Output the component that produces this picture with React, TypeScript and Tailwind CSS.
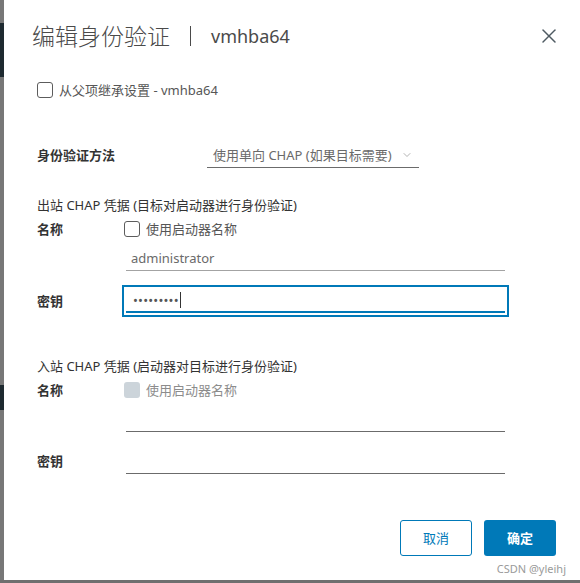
import { X, ChevronDown } from "lucide-react";

const font = { fontFamily: '"Noto Sans", "Noto Sans CJK SC", sans-serif' };

// Underlined text field, Clarity style
const Field = ({ value, tone = "line" }: { value?: string; tone?: "line" | "soft" }) => (
  <div
    className={`ml-[2px] flex h-[25px] w-[379px] items-center border-b pl-[5px] text-[13px] leading-none text-[#6a6a6a] ${
      tone === "soft" ? "border-[#a3a3a3]" : "border-[#6b6b6b]"
    }`}
  >
    {value}
  </div>
);

const Checkbox = ({ disabled = false }: { disabled?: boolean }) => (
  <span
    className={`block h-[16px] w-[16px] shrink-0 rounded-[3px] ${
      disabled ? "bg-[#ccd4da]" : "border border-[#5c5c5c] bg-white"
    }`}
  />
);

const App = () => {
  return (
    <div className="flex h-[583px] w-[580px] flex-col bg-[#6f6f6f]" style={font}>
      <div className="flex h-[580px]">
        {/* Page behind the dialog */}
        <div className="flex w-[4px] flex-col bg-[#777777]">
          <div className="mt-[23px] h-[54px] bg-[#1e2a30]" />
          <div className="mt-[308px] h-[25px] bg-[#1e2a30]" />
        </div>

        <div className="relative flex flex-1 flex-col bg-white">
          {/* Header */}
          <div className="mt-[20px] flex h-[32px] items-center pl-[28px] pr-[19px]">
            <span className="text-[23px] font-light leading-none text-[#4a4a4a]">编辑身份验证</span>
            <span className="mx-[20px] h-[20px] w-px bg-[#4a4a4a]" />
            <span className="text-[18px] leading-none text-[#4a4a4a]">vmhba64</span>
            <X className="ml-auto h-[24px] w-[24px] text-[#4e5a62]" strokeWidth={1.5} />
          </div>

          <div className="flex flex-col pl-[33px]">
            {/* Inherit */}
            <div className="mt-[30px] flex h-[16px] items-center gap-[6px]">
              <Checkbox />
              <span className="text-[13px] leading-none text-[#565656]">从父项继承设置 - vmhba64</span>
            </div>

            {/* Auth method */}
            <div className="mt-[45px] grid grid-cols-[170px_212px] items-center">
              <span className="text-[13px] font-semibold leading-none text-[#333333]">身份验证方法</span>
              <div className="flex h-[25px] items-center border-b border-[#6b6b6b] pl-[6px] pr-[6px] text-[13px] leading-none text-[#6a6a6a]">
                使用单向 CHAP (如果目标需要)
                <ChevronDown className="ml-auto h-[12px] w-[12px] text-[#9a9a9a]" strokeWidth={1.5} />
              </div>
            </div>

            {/* Outbound */}
            <div className="mt-[28px] flex h-[18px] items-center text-[13px] leading-none text-[#333333]">
              出站 CHAP 凭据 (目标对启动器进行身份验证)
            </div>
            <div className="mt-[7px] grid grid-cols-[87px_1fr] items-center">
              <span className="text-[13px] font-semibold leading-none text-[#333333]">名称</span>
              <div className="flex h-[16px] items-center gap-[6px]">
                <Checkbox />
                <span className="text-[13px] leading-none text-[#565656]">使用启动器名称</span>
              </div>
            </div>
            <div className="mt-[9px] grid grid-cols-[87px_1fr]">
              <span />
              <Field value="administrator" tone="soft" />
            </div>
            <div className="mt-[18px] grid grid-cols-[87px_1fr] items-center">
              <span className="text-[13px] font-semibold leading-none text-[#333333]">密钥</span>
              <div className="ml-[2px] flex h-[24px] w-[379px] items-center border-b-2 border-[#0079b8] pl-[7px] outline-2 outline-offset-2 outline-[#0079b8]">
                <span className="text-[13px] leading-none tracking-[0.2px] text-[#555555]">•••••••••</span>
                <span className="ml-[1px] h-[16px] w-px bg-[#333333]" />
              </div>
            </div>

            {/* Inbound */}
            <div className="mt-[44px] flex h-[18px] items-center text-[13px] leading-none text-[#333333]">
              入站 CHAP 凭据 (启动器对目标进行身份验证)
            </div>
            <div className="mt-[7px] grid grid-cols-[87px_1fr] items-center">
              <span className="text-[13px] font-semibold leading-none text-[#333333]">名称</span>
              <div className="flex h-[16px] items-center gap-[6px]">
                <Checkbox disabled />
                <span className="text-[13px] leading-none text-[#8c8c8c]">使用启动器名称</span>
              </div>
            </div>
            <div className="mt-[9px] grid grid-cols-[87px_1fr]">
              <span />
              <Field />
            </div>
            <div className="mt-[17px] grid grid-cols-[87px_1fr] items-center">
              <span className="text-[13px] font-semibold leading-none text-[#333333]">密钥</span>
              <Field />
            </div>
          </div>

          {/* Footer */}
          <div className="mt-[46px] flex justify-end gap-[12px] pr-[24px]">
            <button className="h-[36px] w-[72px] rounded-[3px] border border-[#0079b8] bg-white text-[13px] leading-none text-[#0079b8]">
              取消
            </button>
            <button className="h-[36px] w-[72px] rounded-[3px] bg-[#0079b8] text-[13px] font-semibold leading-none text-white">
              确定
            </button>
          </div>

          <span className="absolute bottom-[6px] right-[14px] text-[11px] leading-none text-[#9a9a9a]">CSDN @yleihj</span>
        </div>
      </div>
    </div>
  );
};

export default App;
